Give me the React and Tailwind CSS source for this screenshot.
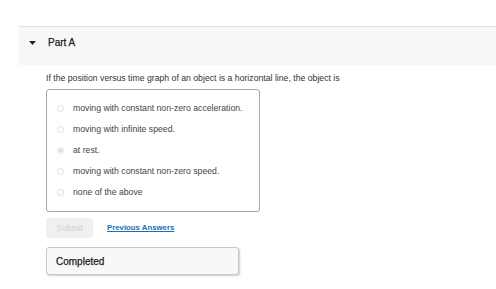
import { useState } from 'react';

const options = [
  'moving with constant non-zero acceleration.',
  'moving with infinite speed.',
  'at rest.',
  'moving with constant non-zero speed.',
  'none of the above',
];

export default function App() {
  const [selected] = useState(2);

  return (
    <div className="w-[496px] h-[289px] bg-white pt-[26px] pl-[19px] text-[#333] font-['Liberation_Sans',Arial,sans-serif]">
      {/* Part header */}
      <div className="h-[39px] border-t border-[#e0e0e0] bg-[#f7f7f7] flex items-start pt-[10px] pl-[10px]">
        <svg width="7" height="4" viewBox="0 0 7 4" className="mt-[4px]">
          <path d="M0 0 L7 0 L3.5 4 Z" fill="#222" />
        </svg>
        <span className="ml-[12px] text-[10px] leading-[12px] text-[#1a1a1a] [-webkit-text-stroke:0.25px_#1a1a1a]">Part A</span>
      </div>

      {/* Question */}
      <div className="pl-[27px]">
        <p className="mt-[7px] text-[8.7px] leading-[12px] text-[#333]">
          If the position versus time graph of an object is a horizontal line, the object is
        </p>

        <div className="mt-[5px] w-[214px] h-[123px] border border-[#a8a8a8] rounded-[3px] pt-[8px] pl-[10px]">
          {options.map((opt, i) => (
            <div key={opt} className="h-[21px] flex items-center">
              <span className="w-[7px] h-[7px] rounded-full border border-[#dcdcdc] bg-white flex items-center justify-center">
                {i === selected && <span className="w-[3px] h-[3px] rounded-full bg-[#cfcfcf]" />}
              </span>
              <span className="ml-[9px] text-[8.7px] text-[#444]">{opt}</span>
            </div>
          ))}
        </div>

        {/* Actions */}
        <div className="mt-[6px] flex items-center">
          <div className="w-[47px] h-[20px] bg-[#f0f0f0] rounded-[2px] flex items-center justify-center text-[8.5px] text-[#d0d0d0]">
            Submit
          </div>
          <a className="ml-[14px] text-[7.8px] font-bold text-[#1a6fb0] underline">Previous Answers</a>
        </div>

        <div className="mt-[9px] w-[193px] h-[28px] border border-[#c8c8c8] rounded-[3px] bg-[#f8f8f8] shadow-[1px_1px_2px_rgba(0,0,0,0.2)] flex items-center pl-[9px]">
          <span className="text-[10px] text-[#1a1a1a] [-webkit-text-stroke:0.25px_#1a1a1a]">Completed</span>
        </div>
      </div>
    </div>
  );
}
